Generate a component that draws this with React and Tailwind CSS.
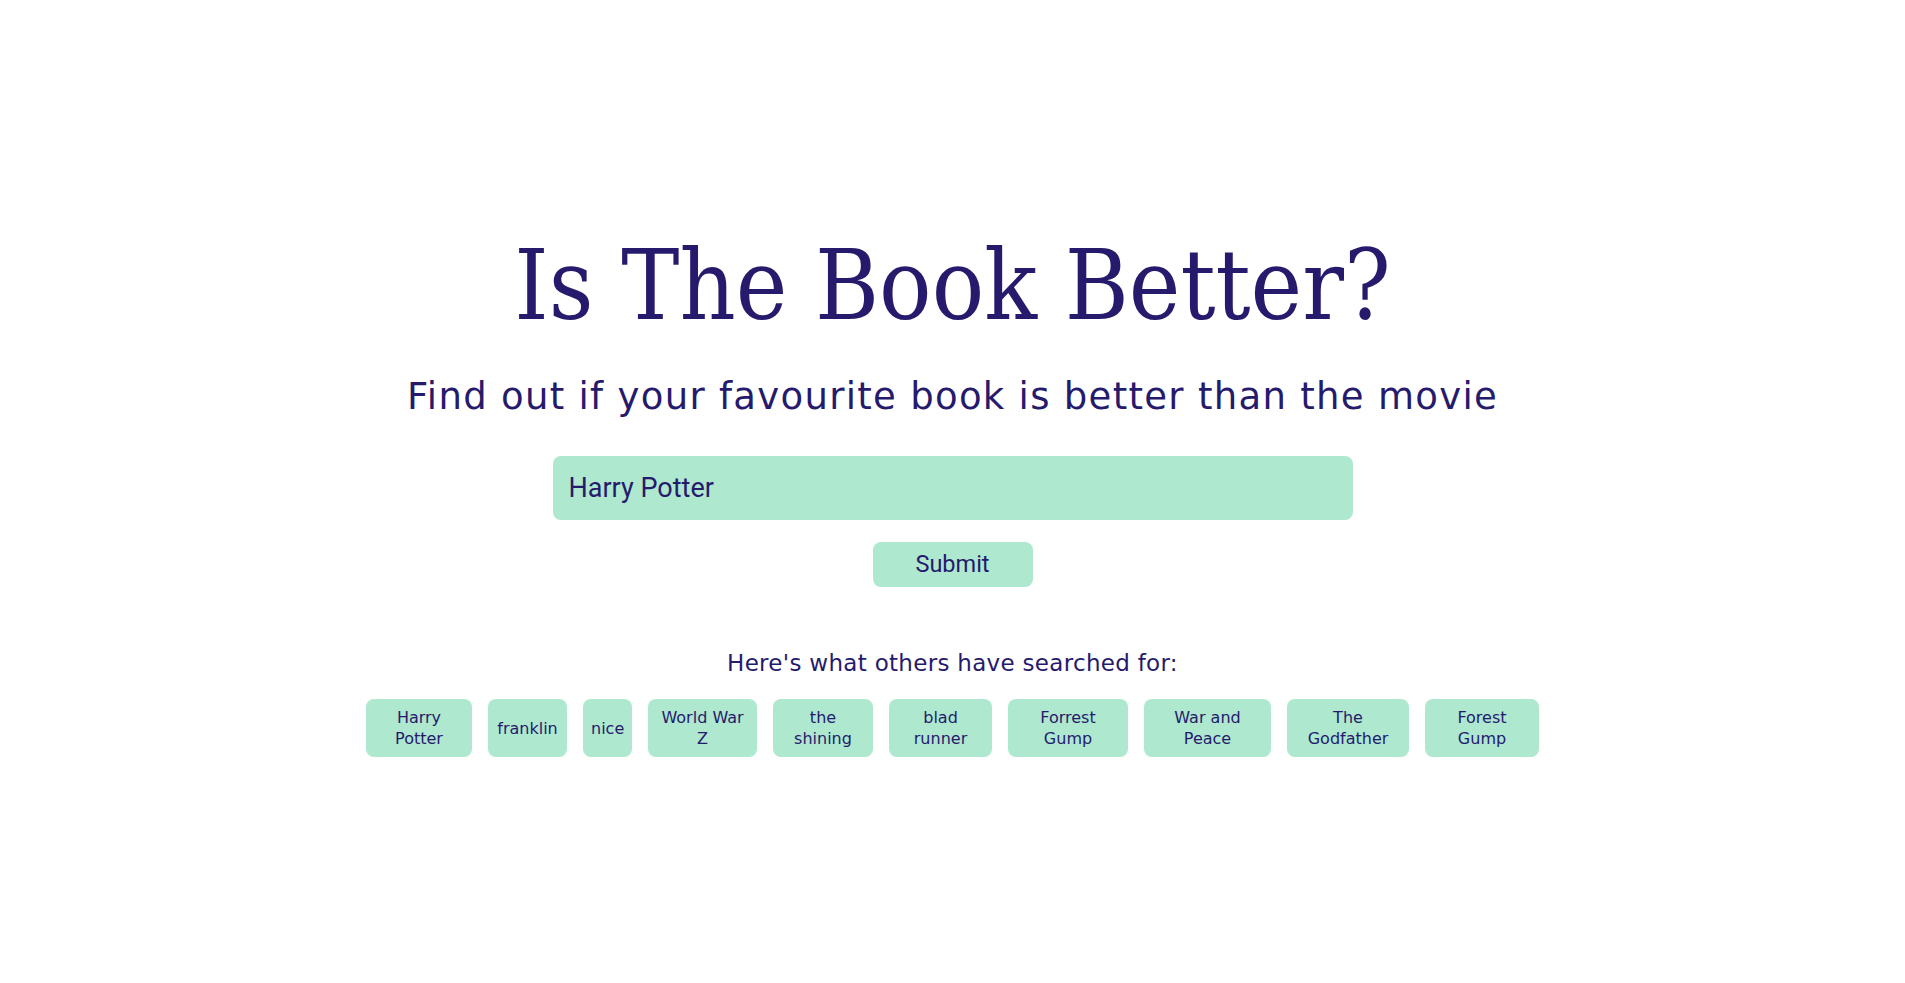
const searches = [
  { label: 'Harry Potter', w: 'w-[106px]' },
  { label: 'franklin', w: 'w-[79px]' },
  { label: 'nice', w: 'w-[49px]' },
  { label: 'World War Z', w: 'w-[109px]' },
  { label: 'the shining', w: 'w-[100px]' },
  { label: 'blad runner', w: 'w-[103px]' },
  { label: 'Forrest Gump', w: 'w-[120px]' },
  { label: 'War and Peace', w: 'w-[127px]' },
  { label: 'The Godfather', w: 'w-[122px]' },
  { label: 'Forest Gump', w: 'w-[114px]' },
];

export default function App() {
  return (
    <div className="min-h-screen bg-white text-[#261a6d] flex flex-col items-center pt-[237px]">
      <h1 className="font-['DejaVu_Serif_Condensed','DejaVu_Serif',serif] text-[97px] leading-none">Is The Book Better?</h1>
      <p className="mt-[44px] font-['DejaVu_Sans',sans-serif] text-[37px] tracking-[1.3px] leading-none">Find out if your favourite book is better than the movie</p>

      <form className="mt-[41px] flex flex-col items-center" onSubmit={e => e.preventDefault()}>
        <input
          className="w-[800px] h-[64px] rounded-lg bg-[#ade8cf] px-4 font-['Roboto',sans-serif] text-[27px] text-[#261a6d] outline-none"
          defaultValue="Harry Potter"
        />
        <button className="mt-[22px] w-[160px] h-[45px] rounded-lg bg-[#ade8cf] font-['Roboto',sans-serif] text-[23.5px] text-[#261a6d]">
          Submit
        </button>
      </form>

      <p className="mt-[65px] font-['DejaVu_Sans',sans-serif] text-[23px] tracking-[0.3px] leading-none">Here's what others have searched for:</p>
      <div className="mt-[24px] flex gap-4">
        {searches.map(s => (
          <button key={s.label} className={`${s.w} h-[58px] rounded-lg bg-[#ade8cf] px-2 font-['DejaVu_Sans',sans-serif] text-[16px] leading-[21px] text-center`}>
            {s.label}
          </button>
        ))}
      </div>
    </div>
  );
}
